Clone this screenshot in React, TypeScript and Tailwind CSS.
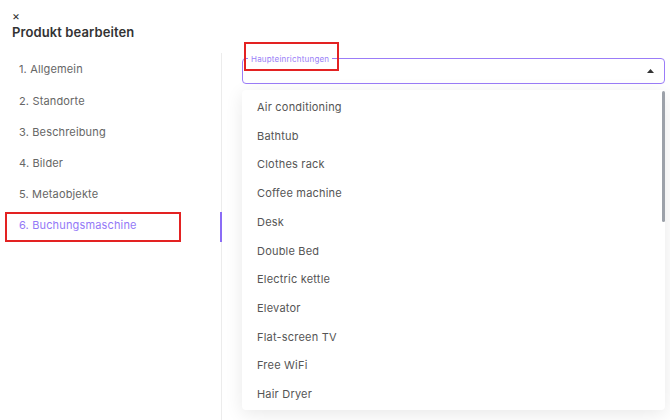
import React from "react";

const steps = [
  "1. Allgemein",
  "2. Standorte",
  "3. Beschreibung",
  "4. Bilder",
  "5. Metaobjekte",
  "6. Buchungsmaschine",
];

const amenities = [
  "Air conditioning",
  "Bathtub",
  "Clothes rack",
  "Coffee machine",
  "Desk",
  "Double Bed",
  "Electric kettle",
  "Elevator",
  "Flat-screen TV",
  "Free WiFi",
  "Hair Dryer",
];

export default function App() {
  const active = 5;
  return (
    <div
      className="relative w-[670px] h-[420px] overflow-hidden bg-white"
      style={{ fontFamily: "Inter, 'Noto Sans', sans-serif" }}
    >
      {/* header */}
      <div className="pl-[12px] pt-[9px] h-[53px]">
        <div className="text-[12px] leading-[13px] text-[#333] h-[13px]">×</div>
        <div className="text-[13px] leading-[18px] font-semibold text-[#333] mt-[1px] tracking-[0.1px]">
          Produkt bearbeiten
        </div>
      </div>

      <div className="flex h-[367px]">
        {/* step navigation */}
        <nav className="w-[222px] shrink-0 border-r border-[#ececec] pt-[1px]">
          {steps.map((s, i) => (
            <div
              key={s}
              className={
                "relative h-[31.2px] flex items-center pl-[19px] text-[11px] tracking-[0.15px] " +
                (i === active ? "text-[#9479f7]" : "text-[#666]")
              }
            >
              {s}
              {i === active && (
                <span className="absolute right-[-1px] top-[2px] bottom-[-1px] w-[2px] bg-[#8b6cf6]" />
              )}
            </div>
          ))}
        </nav>

        {/* main area */}
        <div className="flex-1 pl-[20px] pr-[5px] pt-[5px]">
          {/* select field */}
          <div className="relative h-[26px] rounded-[4px] border border-[#9b7cf8] flex items-center justify-end pr-[10px]">
            <span className="absolute left-[5px] top-[-5px] bg-white px-[3px] text-[8px] leading-[10px] tracking-[0.2px] text-[#9a80f7]">
              Haupteinrichtungen
            </span>
            <svg width="7" height="4" viewBox="0 0 7 4">
              <path d="M0 4 L3.5 0 L7 4 Z" fill="#333" />
            </svg>
          </div>

          {/* dropdown list */}
          <div className="relative mt-[6px] h-[320px] rounded-[4px] bg-white shadow-[0_4px_18px_rgba(0,0,0,0.09)] pt-[3px]">
            {amenities.map((a) => (
              <div
                key={a}
                className="h-[28.7px] flex items-center pl-[15px] text-[11px] tracking-[0.2px] text-[#555]"
              >
                {a}
              </div>
            ))}
            <div className="absolute right-0 top-[1px] w-[3px] h-[131px] rounded-[2px] bg-[#9ca1a9]" />
          </div>
        </div>
      </div>

      {/* highlight marks */}
      <div className="absolute left-[5px] top-[212px] w-[176px] h-[30px] border-2 border-[#e32222] pointer-events-none" />
      <div className="absolute left-[244px] top-[42px] w-[95px] h-[29px] border-2 border-[#e32222] pointer-events-none" />
    </div>
  );
}
